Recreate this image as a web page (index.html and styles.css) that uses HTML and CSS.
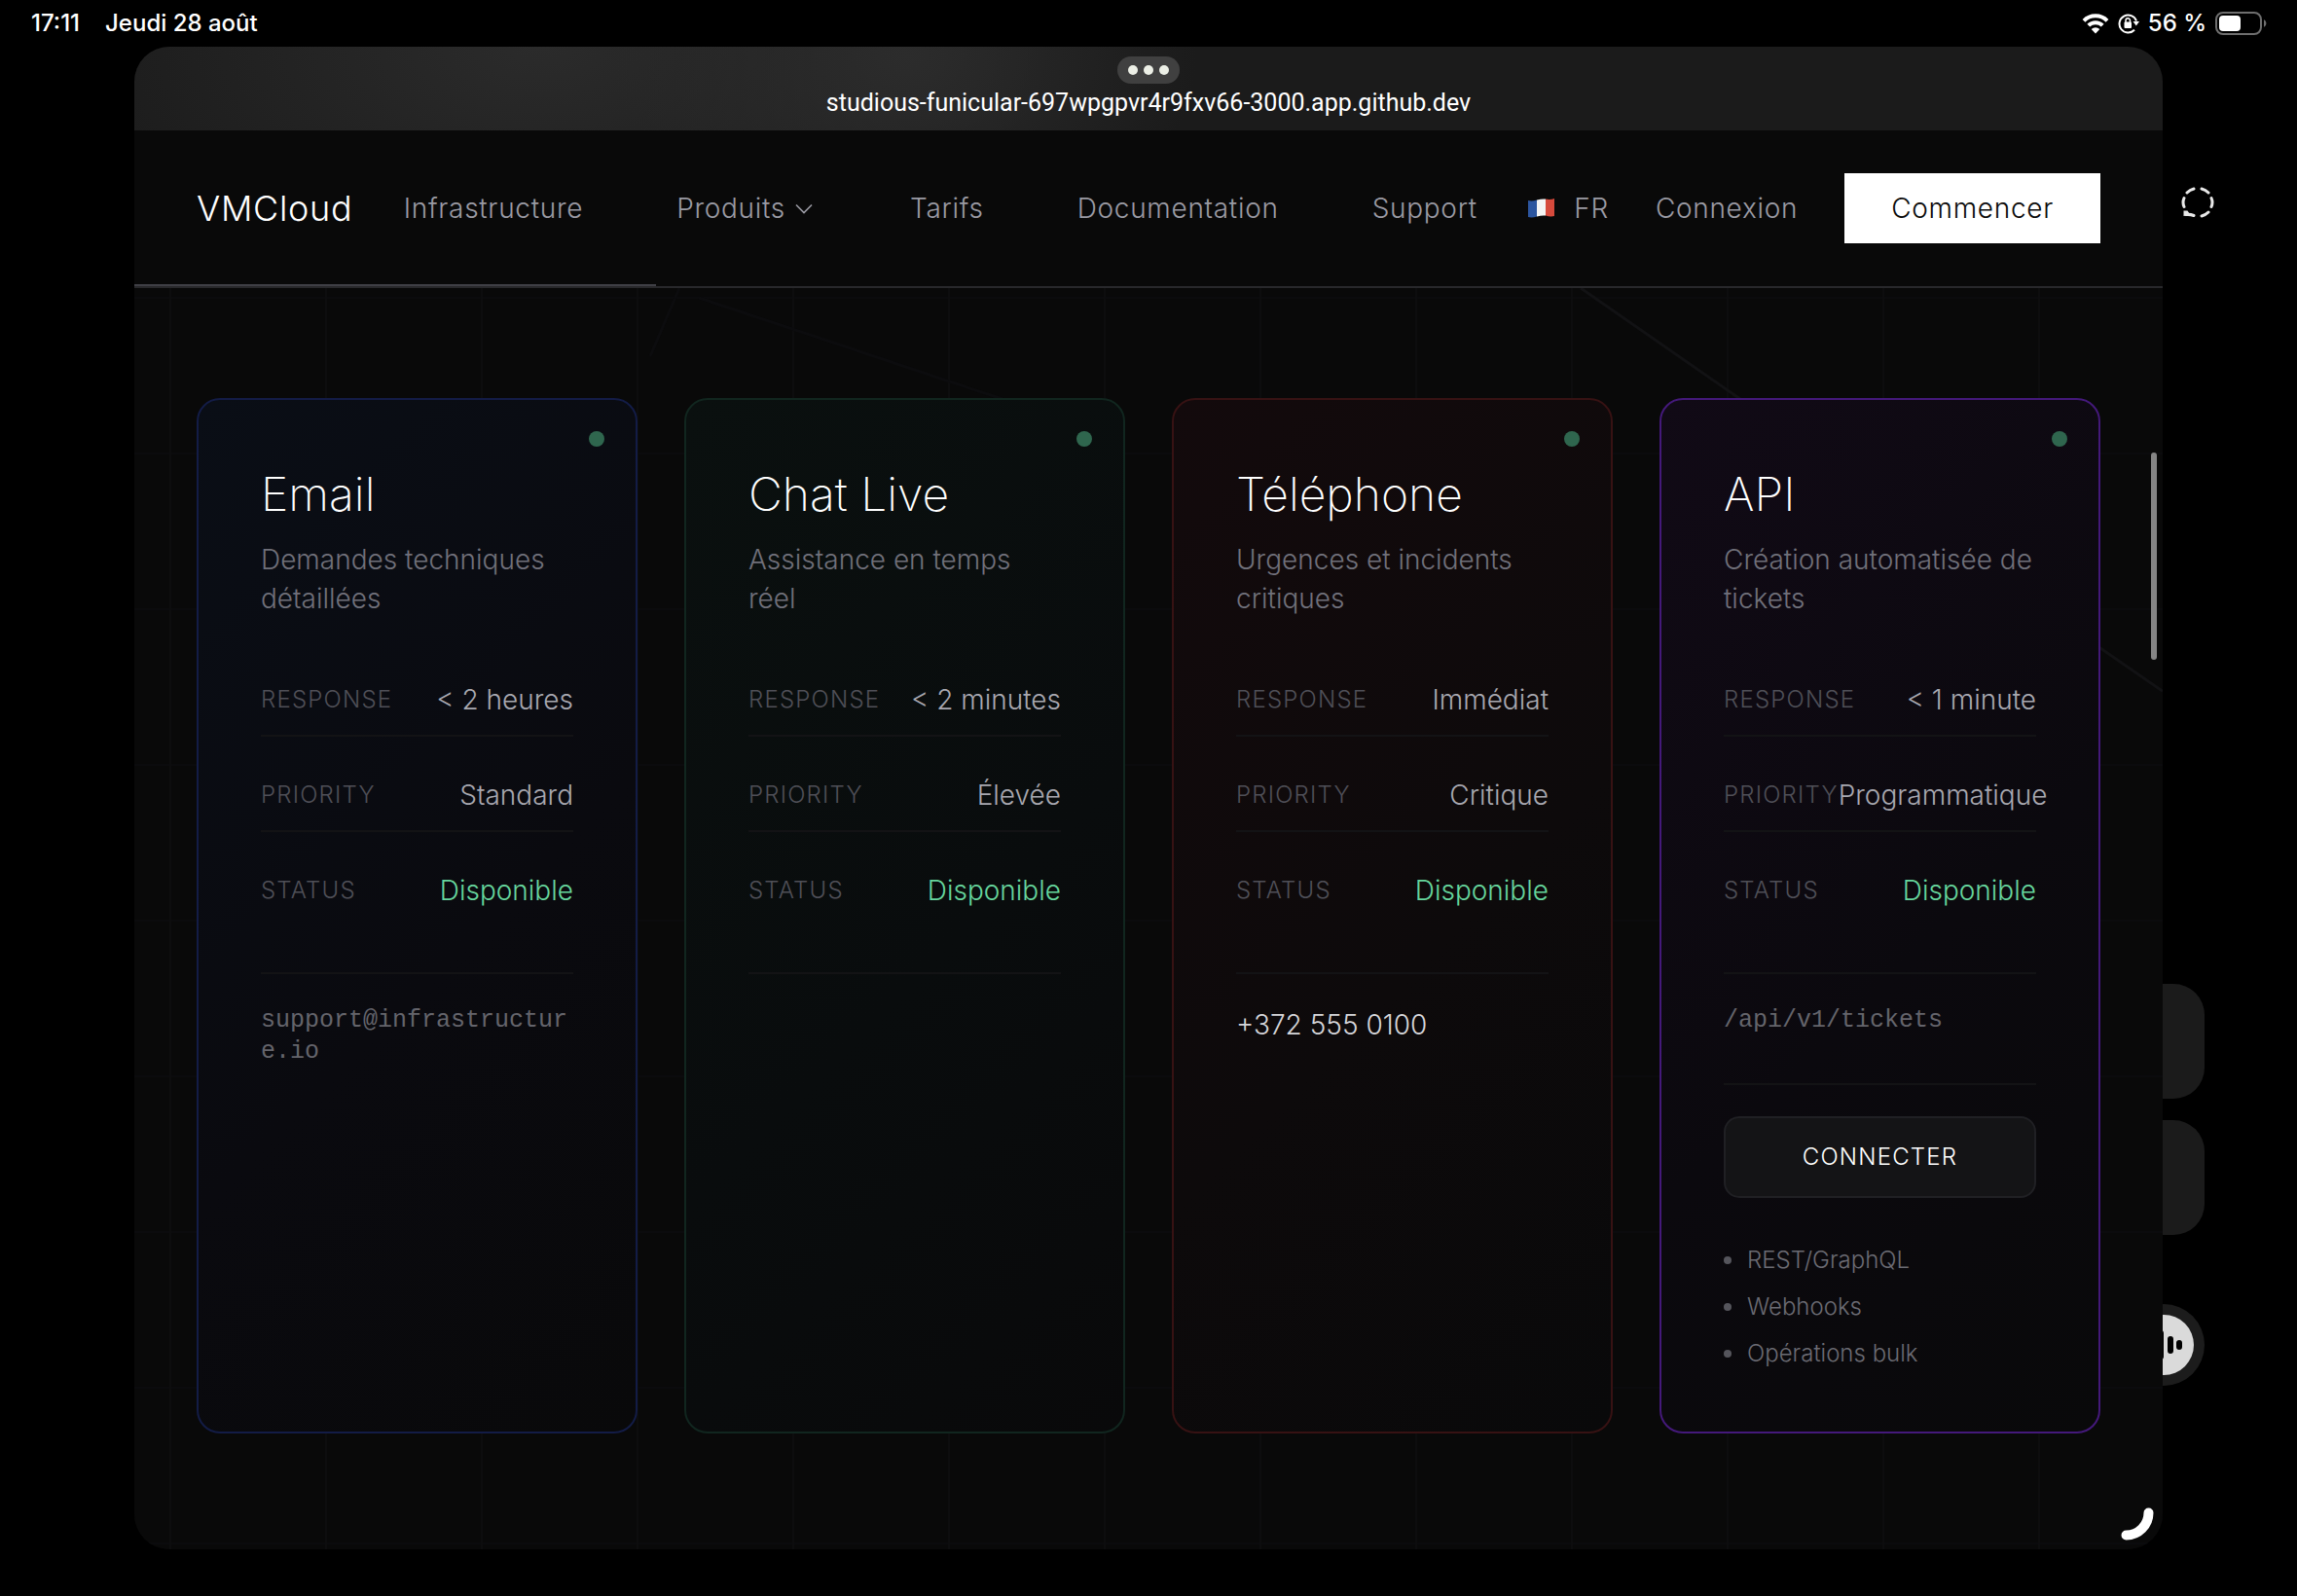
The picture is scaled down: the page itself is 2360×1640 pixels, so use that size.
FILE: index.html
```html
<!DOCTYPE html>
<html lang="fr">
<head>
<meta charset="utf-8">
<meta name="viewport" content="width=device-width, initial-scale=1">
<title>VMCloud – Support</title>
<link rel="stylesheet" href="styles.css">
</head>
<body>
<div class="statusbar">
  <div class="statusbar-side"><span>17:11</span><span>Jeudi 28 août</span></div>
  <div class="statusbar-side statusbar-right">
    <svg class="icon-wifi" viewBox="0 0 28 22" aria-hidden="true"><g fill="none" stroke="#fff" stroke-width="4"><path d="M2 8.300a17 17 0 0 1 24 0"/><path d="M6.800 13.200a10.200 10.200 0 0 1 14.400 0"/></g><path d="M14 21.500l-4.300-4.500a6.200 6.200 0 0 1 8.600 0z" fill="#fff"/></svg>
    <svg class="icon-lock" viewBox="0 0 22 22" aria-hidden="true"><path d="M17 17.800A9 9 0 1 1 19 8.500" fill="none" stroke="#fff" stroke-width="2"/><path d="M15.500 9H22l-3.200 4.500z" fill="#fff"/><rect x="6.500" y="9.500" width="7.500" height="6.500" rx="1" fill="#fff"/><path d="M8 10V8a2.200 2.200 0 0 1 4.500 0v2" fill="none" stroke="#fff" stroke-width="1.500"/></svg>
    <span>56 %</span>
    <svg class="icon-battery" viewBox="0 0 54 24" aria-hidden="true"><rect x="1" y="1" width="46" height="22" rx="7" fill="none" stroke="#6e6e6e" stroke-width="2"/><rect x="4" y="4" width="22" height="16" rx="4" fill="#fff"/><path d="M50 8a4.500 4.500 0 0 1 0 8z" fill="#6e6e6e"/></svg>
  </div>
</div>

<div class="desktop">
  <div class="behind" aria-hidden="true">
    <svg class="lasso" viewBox="0 0 34 32"><g fill="none" stroke="#e8e8e8" stroke-width="3" stroke-linecap="round"><path d="M6 6Q9 3 13 2M21 2Q25 3 28 6M31 11.500Q33 16 31 20.500M28 26Q25 29 21 30M13 29.500Q9 28 5 28.500M3 20.500Q1 16 3 11.500"/></g><path d="M2.500 24.500h4l3 4.500-7 1z" fill="#e8e8e8"/></svg>
    <div class="bubble bubble-a"></div>
    <div class="bubble bubble-b"></div>
    <div class="voice"><svg viewBox="0 0 84 84"><circle cx="42" cy="42" r="42" fill="#1c1c1c"/><circle cx="42" cy="42" r="31" fill="#dadada"/><g stroke="#000" stroke-width="6" stroke-linecap="round"><path d="M39 30v24M49 36v12M58 40v4"/></g></svg></div>
  </div>

  <div class="window">
    <header class="titlebar">
      <button class="multitask" type="button" aria-label="Multitâche"><i></i><i></i><i></i></button>
      <span class="url">studious-funicular-697wpgpvr4r9fxv66-3000.app.github.dev</span>
    </header>

    <nav class="nav">
      <a class="brand" href="#">VMCloud</a>
      <div class="nav-links">
        <a href="#">Infrastructure</a>
        <a class="has-menu" href="#">Produits <svg viewBox="0 0 18 11" aria-hidden="true"><path d="M1 1.500l8 8 8-8" fill="none" stroke="currentColor" stroke-width="1.600"/></svg></a>
        <a href="#">Tarifs</a>
        <a href="#">Documentation</a>
        <a href="#">Support</a>
      </div>
      <div class="nav-actions">
        <button class="lang" type="button"><svg viewBox="0 0 27 20" aria-hidden="true"><path d="M0 2Q4 3 9 1.500V18.500Q4 20 0 19z" fill="#2c56a0"/><path d="M9 1.500Q14 0 18 .500V17.500Q14 17 9 18.500z" fill="#f4f4f4"/><path d="M18 .500Q23 1.500 27 0V18Q23 19 18 17.500z" fill="#d64a3c"/></svg>FR</button>
        <a href="#">Connexion</a>
        <button class="cta" type="button">Commencer</button>
      </div>
      <div class="progress"></div>
    </nav>

    <main class="content">
      <svg class="rays" viewBox="0 0 2084 1295" preserveAspectRatio="none" aria-hidden="true"><g fill="none" stroke-width="3"><path d="M1486 0L1650 114L2084 414" stroke="#121214"/><path d="M560 0L530 70M580 10L1000 150" stroke="#0c0c0e"/></g></svg>
      <section class="cards">
        <article class="card card-blue">
          <span class="dot"></span>
          <h3>Email</h3>
          <p class="desc">Demandes techniques détaillées</p>
          <dl class="specs">
            <div><dt>Response</dt><dd>&lt; 2 heures</dd></div>
            <div><dt>Priority</dt><dd>Standard</dd></div>
            <div><dt>Status</dt><dd class="ok">Disponible</dd></div>
          </dl>
          <div class="contact mono">support@infrastructure.io</div>
        </article>
        <article class="card card-green">
          <span class="dot"></span>
          <h3>Chat Live</h3>
          <p class="desc">Assistance en temps réel</p>
          <dl class="specs">
            <div><dt>Response</dt><dd>&lt; 2 minutes</dd></div>
            <div><dt>Priority</dt><dd>Élevée</dd></div>
            <div><dt>Status</dt><dd class="ok">Disponible</dd></div>
          </dl>
          <div class="contact"></div>
        </article>
        <article class="card card-red">
          <span class="dot"></span>
          <h3>Téléphone</h3>
          <p class="desc">Urgences et incidents critiques</p>
          <dl class="specs">
            <div><dt>Response</dt><dd>Immédiat</dd></div>
            <div><dt>Priority</dt><dd>Critique</dd></div>
            <div><dt>Status</dt><dd class="ok">Disponible</dd></div>
          </dl>
          <div class="contact phone">+372 555 0100</div>
        </article>
        <article class="card card-purple">
          <span class="dot"></span>
          <h3>API</h3>
          <p class="desc">Création automatisée de tickets</p>
          <dl class="specs">
            <div><dt>Response</dt><dd>&lt; 1 minute</dd></div>
            <div><dt>Priority</dt><dd>Programmatique</dd></div>
            <div><dt>Status</dt><dd class="ok">Disponible</dd></div>
          </dl>
          <div class="contact mono">/api/v1/tickets</div>
          <div class="extra">
            <button class="connect" type="button">Connecter</button>
            <ul class="features"><li>REST/GraphQL</li><li>Webhooks</li><li>Opérations bulk</li></ul>
          </div>
        </article>
      </section>
    </main>
    <div class="scrollbar"></div>
    <svg class="grip" viewBox="0 0 34 34" aria-hidden="true"><path d="M28.500 5.500A23 23 0 0 1 5.500 28.500" fill="none" stroke="#fff" stroke-width="10" stroke-linecap="round"/></svg>
  </div>
</div>
</body>
</html>
```

FILE: styles.css
```css
* { box-sizing: border-box; margin: 0; padding: 0; }
html { background: #000; }
body {
  min-height: 100vh;
  display: flex;
  flex-direction: column;
  background: #000;
  color: #fff;
  font-family: Inter, "Liberation Sans", sans-serif;
  font-size: 28px;
  font-weight: 300;
  line-height: 40px;
  overflow: hidden;
}
a { color: inherit; text-decoration: none; }
button { font: inherit; color: inherit; background: none; border: 0; }

/* System status bar */
.statusbar {
  display: flex;
  justify-content: space-between;
  align-items: center;
  height: 48px;
  padding: 0 30px 0 32px;
  font-size: 24px;
  font-weight: 500;
}
.statusbar-side { display: flex; align-items: center; gap: 26px; }
.statusbar-right { gap: 9px; }
.icon-wifi { width: 28px; height: 22px; }
.icon-lock { width: 22px; height: 22px; }
.icon-battery { width: 54px; height: 24px; }

/* Stage holding the app window and the app behind it */
.desktop {
  position: relative;
  flex: 1;
  display: flex;
  padding: 0 138px 48px;
}
.behind { position: absolute; inset: 0; }
.lasso { position: absolute; right: 85px; top: 144px; width: 34px; height: 32px; }
.bubble {
  position: absolute;
  right: 95px;
  width: 120px;
  height: 118px;
  border-radius: 32px;
  background: #1b1b1b;
}
.bubble-a { top: 963px; }
.bubble-b { top: 1103px; }
.voice { position: absolute; right: 95px; top: 1292px; width: 84px; height: 84px; }
.voice svg { display: block; }

.window {
  position: relative;
  flex: 1;
  display: flex;
  flex-direction: column;
  border-radius: 36px;
  overflow: hidden;
  background: #090909;
}
.titlebar {
  display: flex;
  flex-direction: column;
  align-items: center;
  height: 86px;
  padding-top: 10px;
  background:
    radial-gradient(ellipse 300px 220px at 38% 10%, #2c2c2c, transparent),
    radial-gradient(ellipse 520px 260px at 20% 0, #2b2b2b, transparent),
    #1b1b1b;
}
.multitask {
  display: flex;
  align-items: center;
  justify-content: center;
  gap: 6px;
  width: 64px;
  height: 28px;
  border-radius: 14px;
  background: #404040;
}
.multitask i { width: 10px; height: 10px; border-radius: 50%; background: #ecefe6; }
.url { font-family: Roboto, Inter, sans-serif; font-size: 25px; line-height: 40px; font-weight: 400; }

/* Site navigation */
.nav {
  position: relative;
  display: flex;
  align-items: center;
  justify-content: space-between;
  height: 162px;
  padding: 0 64px;
  border-bottom: 2px solid #28282b;
  color: #9a9aa3;
  letter-spacing: 0.7px;
}
.brand { color: #fff; font-size: 36px; }
.nav-links { display: flex; gap: 96px; }
.has-menu { display: flex; align-items: center; gap: 10px; padding-right: 4px; }
.has-menu svg { width: 18px; height: 11px; }
.nav-actions { display: flex; align-items: center; gap: 48px; }
.lang { display: flex; align-items: center; gap: 20px; letter-spacing: inherit; }
.lang svg { width: 27px; height: 20px; }
.cta {
  padding: 16px 48px;
  background: #fff;
  color: #0a0a0a;
  letter-spacing: inherit;
}
.progress {
  position: absolute;
  left: 0;
  bottom: 0;
  width: 536px;
  height: 2px;
  background: #3f3f45;
}

/* Page content with a faint grid */
.content {
  position: relative;
  flex: 1;
  padding: 113px 64px 118px;
  background:
    repeating-linear-gradient(90deg, transparent 0 36px, #0d0d0e 36px 38px, transparent 38px 160px),
    repeating-linear-gradient(180deg, transparent 0 9px, #0b0b0d 9px 11px, transparent 11px 160px),
    #090909;
}
.rays { position: absolute; inset: 0; width: 100%; height: 100%; }
.cards {
  position: relative;
  display: grid;
  grid-template-columns: repeat(4, minmax(0, 1fr));
  gap: 48px;
}
.card {
  position: relative;
  padding: 64px;
  border: 2px solid;
  border-radius: 24px;
}
.card-blue { border-color: #131c46; background: linear-gradient(135deg, #0a0e16, #0a0a0f 55%, #09090a); }
.card-green { border-color: #11261f; background: linear-gradient(135deg, #0a100f, #090c0d 55%, #09090a); }
.card-red { border-color: #371213; background: linear-gradient(135deg, #130a0c, #0d0a0b 55%, #09090a); }
.card-purple { border-color: #44197a; background: linear-gradient(135deg, #110a16, #0b090e 55%, #09090a); }
.dot {
  position: absolute;
  top: 32px;
  right: 32px;
  width: 16px;
  height: 16px;
  border-radius: 50%;
  background: #2f664e;
}
.card h3 { font-size: 48px; line-height: 66px; font-weight: 200; margin-bottom: 14px; }
.desc { height: 80px; margin-bottom: 64px; color: #70707a; }
.specs > div {
  display: flex;
  justify-content: space-between;
  align-items: center;
  height: 58px;
  margin-bottom: 40px;
  padding-bottom: 16px;
  border-bottom: 2px solid #131315;
}
.specs > div:last-child { border-bottom-color: transparent; margin-bottom: 46px; }
.specs dt {
  font-size: 24px;
  line-height: 32px;
  letter-spacing: 1.2px;
  text-transform: uppercase;
  color: #4f4f57;
}
.specs dd { color: #a8a8b0; }
.specs .ok { color: #66d69d; }
.contact { min-height: 34px; padding-top: 32px; border-top: 2px solid #131315; }
.mono {
  font-family: "Liberation Mono", monospace;
  font-size: 25px;
  line-height: 32px;
  color: #64646b;
  word-break: break-all;
}
.phone { color: #d6d6da; }
.extra { margin-top: 48px; padding-top: 32px; border-top: 2px solid #131315; }
.connect {
  display: block;
  width: 100%;
  height: 84px;
  border: 2px solid #202024;
  border-radius: 16px;
  background: #141416;
  font-size: 24px;
  letter-spacing: 1.2px;
  text-transform: uppercase;
}
.features { margin-top: 48px; list-style: none; font-size: 24px; line-height: 32px; color: #6b6b73; }
.features li { display: flex; align-items: center; gap: 16px; }
.features li + li { margin-top: 16px; }
.features li::before { content: ""; width: 8px; height: 8px; border-radius: 50%; background: #55555c; }

.scrollbar {
  position: absolute;
  right: 6px;
  top: 417px;
  width: 6px;
  height: 213px;
  border-radius: 3px;
  background: #858585;
}
.grip { position: absolute; right: 9px; bottom: 9px; width: 34px; height: 34px; }
```
